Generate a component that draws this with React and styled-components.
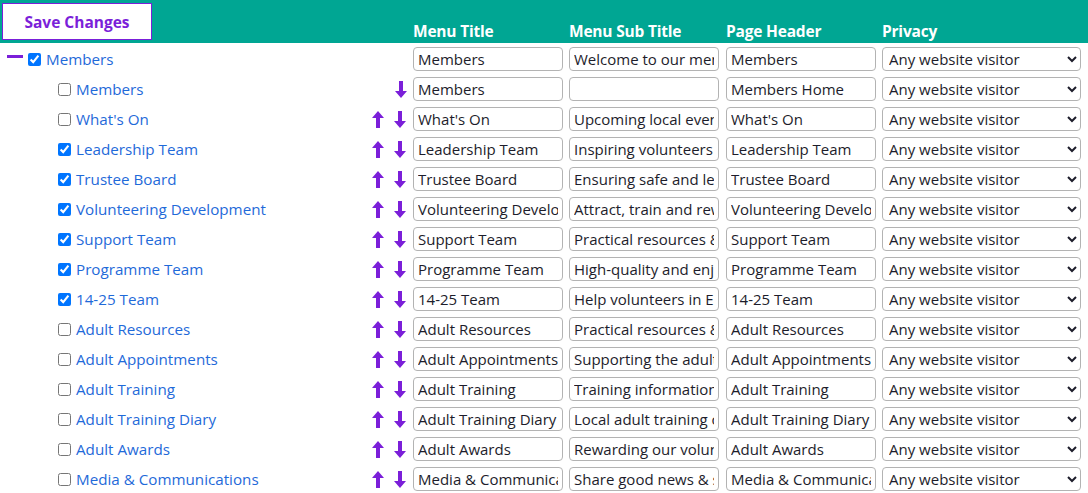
import styled, { createGlobalStyle } from "styled-components";

const GlobalStyle = createGlobalStyle`
  body {
    margin: 0;
    font-family: "Open Sans", "Noto Sans", sans-serif;
    background: #fff;
  }
`;

const pages = [
  { name: "Members", title: "Members", sub: "", header: "Members Home", checked: false, up: false },
  { name: "What's On", title: "What's On", sub: "Upcoming local events and activities", header: "What's On", checked: false },
  { name: "Leadership Team", title: "Leadership Team", sub: "Inspiring volunteers to lead", header: "Leadership Team", checked: true },
  { name: "Trustee Board", title: "Trustee Board", sub: "Ensuring safe and legal governance", header: "Trustee Board", checked: true },
  { name: "Volunteering Development", title: "Volunteering Development", sub: "Attract, train and reward volunteers", header: "Volunteering Development", checked: true },
  { name: "Support Team", title: "Support Team", sub: "Practical resources & support", header: "Support Team", checked: true },
  { name: "Programme Team", title: "Programme Team", sub: "High-quality and enjoyable programmes", header: "Programme Team", checked: true },
  { name: "14-25 Team", title: "14-25 Team", sub: "Help volunteers in England", header: "14-25 Team", checked: true },
  { name: "Adult Resources", title: "Adult Resources", sub: "Practical resources & guides", header: "Adult Resources", checked: false },
  { name: "Adult Appointments", title: "Adult Appointments", sub: "Supporting the adult appointments process", header: "Adult Appointments", checked: false },
  { name: "Adult Training", title: "Adult Training", sub: "Training information for adults", header: "Adult Training", checked: false },
  { name: "Adult Training Diary", title: "Adult Training Diary", sub: "Local adult training courses", header: "Adult Training Diary", checked: false },
  { name: "Adult Awards", title: "Adult Awards", sub: "Rewarding our volunteers", header: "Adult Awards", checked: false },
  { name: "Media & Communications", title: "Media & Communications", sub: "Share good news & stories", header: "Media & Communications", checked: false },
];

const cols = "366px 47px 156px 157px 156px 200px";

const Page = styled.div`
  width: 1088px;
`;

const HeaderBar = styled.div`
  display: grid;
  grid-template-columns: ${cols};
  align-items: end;
  height: 43px;
  background: #00a693;
  box-sizing: border-box;
`;

const SaveButton = styled.button`
  align-self: start;
  margin: 3px 0 0 2px;
  width: 150px;
  height: 37px;
  background: #fff;
  border: 1px solid #7b1fd9;
  color: #7b1fd9;
  font-family: inherit;
  font-weight: 700;
  font-size: 15.5px;
  cursor: pointer;
`;

const ColHead = styled.div`
  color: #fff;
  font-weight: 700;
  font-size: 15.5px;
  letter-spacing: -0.2px;
  padding-bottom: 2px;
  line-height: 20px;
`;

const Body = styled.div`
  padding-top: 1px;
`;

const Row = styled.div`
  display: grid;
  grid-template-columns: ${cols};
  align-items: center;
  height: 30px;
`;

const NameCell = styled.label`
  display: flex;
  align-items: center;
  padding-left: ${(p) => (p.$parent ? "7px" : "57px")};
  color: #1f6ad9;
  font-size: 15.2px;
`;

const Collapse = styled.span`
  display: inline-block;
  width: 16px;
  height: 3px;
  background: #7b1fd9;
  margin-right: 4px;
  margin-top: -6px;
`;

const Check = styled.input`
  width: 13px;
  height: 13px;
  margin: 0 5px 0 1px;
`;

const Arrows = styled.div`
  display: flex;
  gap: 10px;
  padding-left: 6px;
  justify-content: ${(p) => (p.$downOnly ? "flex-end" : "flex-start")};
  padding-right: ${(p) => (p.$downOnly ? "6px" : "0")};
`;

const ArrowIcon = styled.svg`
  width: 12px;
  height: 17px;
  fill: #7b1fd9;
  display: block;
`;

const TextBox = styled.input`
  box-sizing: border-box;
  width: 150px;
  height: 24px;
  border: 1px solid #b3b3b3;
  border-radius: 4px;
  padding: 0 4px;
  font-family: inherit;
  font-size: 15px;
  color: #1d1d2b;
  background: #fff;
`;

const Select = styled.select`
  box-sizing: border-box;
  width: 199px;
  height: 24px;
  border: 1px solid #b3b3b3;
  border-radius: 4px;
  padding: 0 2px;
  font-family: inherit;
  font-size: 15px;
  color: #1d1d2b;
  background: #fff;
`;

const Up = () => (
  <ArrowIcon viewBox="0 0 12 17">
    <path d="M6 0 L12 7 L8 7 L8 17 L4 17 L4 7 L0 7 Z" />
  </ArrowIcon>
);

const Down = () => (
  <ArrowIcon viewBox="0 0 12 17">
    <path d="M6 17 L12 10 L8 10 L8 0 L4 0 L4 10 L0 10 Z" />
  </ArrowIcon>
);

const Fields = ({ title, sub, header }) => (
  <>
    <TextBox defaultValue={title} />
    <TextBox defaultValue={sub} />
    <TextBox defaultValue={header} />
    <Select defaultValue="any">
      <option value="any">Any website visitor</option>
      <option value="members">Members only</option>
    </Select>
  </>
);

export default function App() {
  return (
    <Page>
      <GlobalStyle />
      <HeaderBar>
        <SaveButton>Save Changes</SaveButton>
        <div />
        <ColHead>Menu Title</ColHead>
        <ColHead>Menu Sub Title</ColHead>
        <ColHead>Page Header</ColHead>
        <ColHead>Privacy</ColHead>
      </HeaderBar>
      <Body>
        <Row>
          <NameCell $parent>
            <Collapse />
            <Check type="checkbox" defaultChecked />
            Members
          </NameCell>
          <div />
          <Fields title="Members" sub="Welcome to our members area" header="Members" />
        </Row>
        {pages.map((p, i) => (
          <Row key={i}>
            <NameCell>
              <Check type="checkbox" defaultChecked={p.checked} />
              {p.name}
            </NameCell>
            <Arrows $downOnly={p.up === false}>
              {p.up !== false && <Up />}
              <Down />
            </Arrows>
            <Fields title={p.title} sub={p.sub} header={p.header} />
          </Row>
        ))}
      </Body>
    </Page>
  );
}
